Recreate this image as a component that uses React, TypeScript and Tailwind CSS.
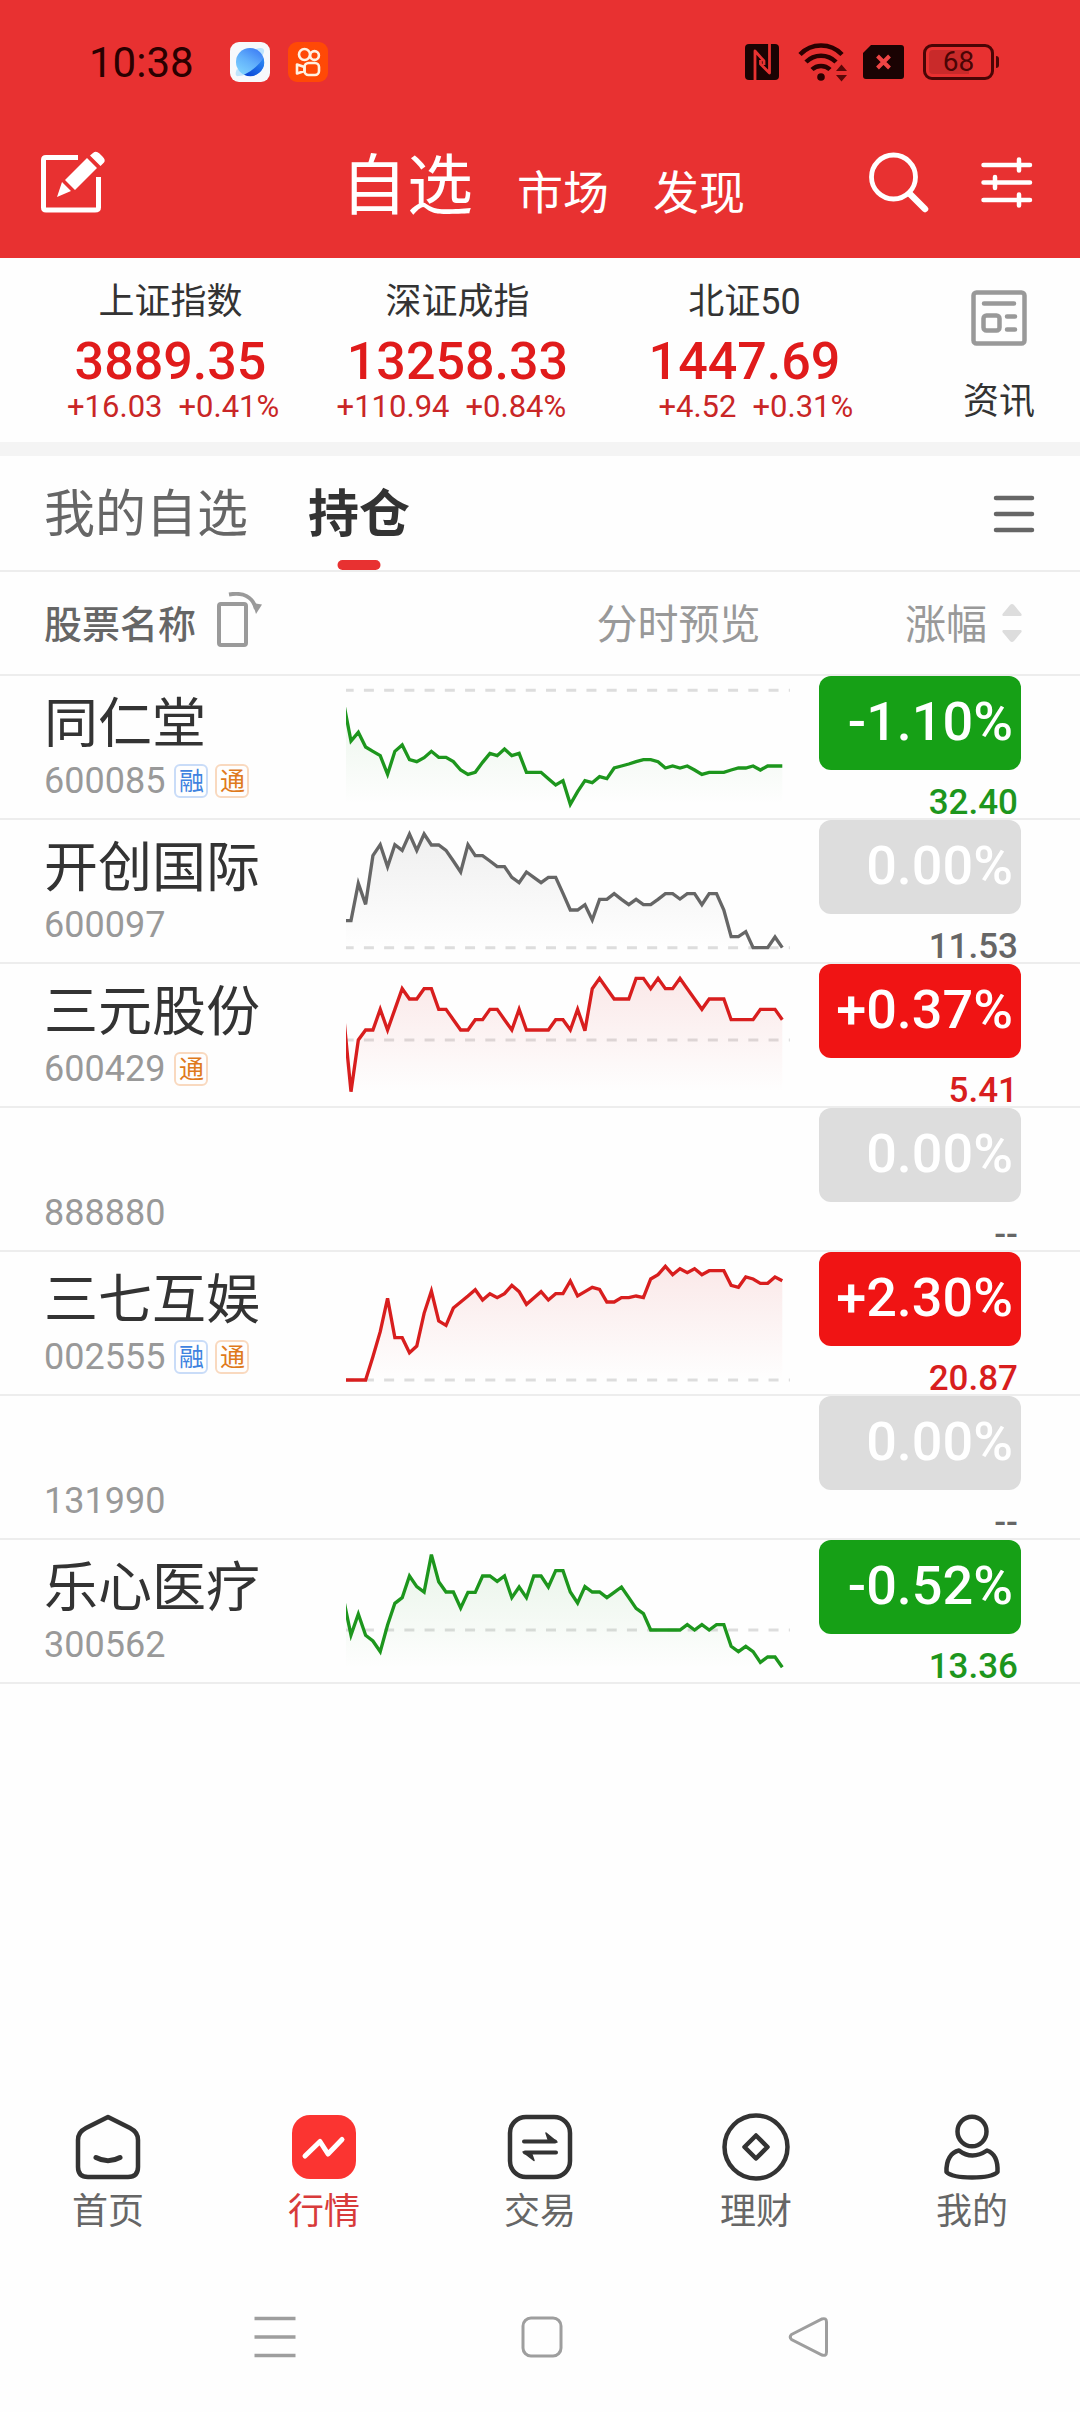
import React from "react";

const UP = "#d81e1e";
const DOWN = "#1d961d";
const FLAT = "#666666";

type Trend = "up" | "down" | "flat";

interface Stock {
  name: string;
  code: string;
  tags: ("融" | "通")[];
  trend: Trend;
  change: string;
  price: string;
  base?: number;
  series?: number[];
}

const stocks: Stock[] = [
  {
    name: "同仁堂", code: "600085", tags: ["融", "通"], trend: "down", change: "-1.10%", price: "32.40", base: 43,
    series: [82, 195, 169, 213, 226, 239, 295, 226, 207, 251, 257, 245, 226, 244, 244, 257, 282, 295, 289, 259, 232, 239, 219, 239, 232, 289, 289, 289, 308, 327, 314, 385, 347, 314, 320, 302, 308, 276, 270, 264, 257, 251, 251, 257, 276, 270, 276, 270, 282, 295, 289, 289, 289, 282, 276, 276, 270, 282, 270, 270, 270],
  },
  {
    name: "开创国际", code: "600097", tags: [], trend: "flat", change: "0.00%", price: "11.53", base: 383,
    series: [302, 302, 190, 253, 107, 74, 140, 74, 91, 42, 91, 42, 75, 75, 91, 123, 156, 74, 107, 107, 123, 140, 140, 172, 188, 156, 172, 188, 172, 172, 220, 270, 270, 254, 300, 238, 238, 221, 238, 254, 238, 254, 254, 238, 221, 221, 237, 221, 221, 254, 221, 221, 270, 350, 350, 335, 383, 383, 383, 351, 383],
  },
  {
    name: "三元股份", code: "600429", tags: ["通"], trend: "up", change: "+0.37%", price: "5.41", base: 228,
    series: [158, 383, 228, 198, 198, 136, 198, 136, 74, 105, 105, 74, 74, 136, 136, 167, 198, 198, 167, 167, 136, 136, 167, 198, 136, 198, 198, 198, 198, 167, 167, 198, 136, 200, 74, 43, 74, 105, 105, 105, 43, 43, 74, 43, 74, 74, 43, 74, 105, 136, 105, 105, 105, 167, 167, 167, 167, 136, 136, 136, 167],
  },
  { name: "", code: "888880", tags: [], trend: "flat", change: "0.00%", price: "--" },
  {
    name: "三七互娱", code: "002555", tags: ["融", "通"], trend: "up", change: "+2.30%", price: "20.87", base: 384,
    series: [384, 384, 384, 384, 314, 239, 139, 257, 257, 302, 282, 184, 117, 207, 220, 168, 150, 132, 113, 144, 125, 137, 125, 100, 119, 157, 138, 119, 144, 125, 125, 87, 132, 119, 106, 112, 150, 150, 137, 137, 132, 137, 81, 68, 43, 68, 50, 62, 50, 68, 56, 56, 56, 100, 106, 75, 81, 94, 94, 75, 86],
  },
  { name: "", code: "131990", tags: [], trend: "flat", change: "0.00%", price: "--" },
  {
    name: "乐心医疗", code: "300562", tags: [], trend: "down", change: "-0.52%", price: "13.36", base: 270,
    series: [180, 285, 222, 286, 303, 335, 255, 190, 173, 108, 140, 156, 44, 125, 156, 156, 204, 157, 157, 108, 108, 124, 108, 173, 141, 173, 108, 108, 141, 92, 92, 156, 189, 140, 156, 156, 173, 157, 141, 173, 205, 221, 270, 270, 270, 270, 270, 254, 270, 254, 270, 254, 254, 319, 335, 319, 335, 367, 351, 351, 382],
  },
];

const indices = [
  { name: "上证指数", value: "3889.35", diff: "+16.03", pct: "+0.41%" },
  { name: "深证成指", value: "13258.33", diff: "+110.94", pct: "+0.84%" },
  { name: "北证50", value: "1447.69", diff: "+4.52", pct: "+0.31%" },
];

const trendColor: Record<Trend, string> = { up: UP, down: DOWN, flat: FLAT };
const badgeClass: Record<Trend, string> = { up: "bg-[#f01414]", down: "bg-[#16a016]", flat: "bg-[#dddddd]" };
const priceClass: Record<Trend, string> = { up: "text-[#d81e1e]", down: "text-[#1d961d]", flat: "text-[#666666]" };

function Sparkline({ stock }: { stock: Stock }) {
  if (!stock.series) return null;
  const color = trendColor[stock.trend];
  const pts = stock.series.map((y, i) => `${(17 + 21.95 * (i - 1)).toFixed(1)},${y}`).join(" ");
  const id = `fill-${stock.code}`;
  return (
    <svg className="block h-[142px] w-full" viewBox="2 0 1336 426" preserveAspectRatio="none" role="img" aria-label={`${stock.name}分时预览`}>
      <defs>
        <linearGradient id={id} gradientUnits="userSpaceOnUse" x1="0" y1="30" x2="0" y2="385">
          <stop offset="0" stopColor={color} stopOpacity="0.1" />
          <stop offset="1" stopColor={color} stopOpacity="0" />
        </linearGradient>
      </defs>
      <line x1="-5" x2="1335" y1={stock.base} y2={stock.base} stroke="#dddddd" strokeWidth="9" strokeDasharray="30 30.75" />
      <polygon points={`-5,385 ${pts} 1312,385`} fill={`url(#${id})`} />
      <polyline points={pts} fill="none" stroke={color} strokeWidth="10" strokeMiterlimit="4" />
    </svg>
  );
}

function Tag({ kind }: { kind: "融" | "通" }) {
  const tone = kind === "融" ? "border-[#c9dcf8] text-[#3f83e0]" : "border-[#f9d9bf] text-[#df7a1c]";
  return (
    <span className={`flex size-[34px] items-center justify-center rounded-md border-2 pt-0.5 text-[25px] leading-[28px] ${tone}`}>{kind}</span>
  );
}

function StatusBar() {
  return (
    <div className="flex h-[124px] items-center justify-between pr-[81px] pl-[89px] text-[#2a0000]">
      <div className="flex items-center">
        <span className="pt-0.5 text-[42px] leading-[48px]">10:38</span>
        <svg className="ml-9" width="40" height="40" viewBox="0 0 40 40" aria-hidden="true">
          <defs>
            <linearGradient id="planet" x1="0.8" y1="0" x2="0.2" y2="1">
              <stop offset="0" stopColor="#3b7bf5" />
              <stop offset="0.5" stopColor="#62b0fb" />
              <stop offset="1" stopColor="#7fd4ff" />
            </linearGradient>
            <linearGradient id="planetShade" x1="1" y1="0" x2="0.2" y2="1">
              <stop offset="0" stopColor="#2f8df5" />
              <stop offset="1" stopColor="#0a49d8" />
            </linearGradient>
          </defs>
          <rect width="40" height="40" rx="9" fill="#f7f9fc" />
          <path d="M26 7 C31 5 35 6 34 10 C33 14 30 18 27 21 Z" fill="#bfe4fd" />
          <path d="M7 27 C5 31 5 35 9 34 C12 34 14 33 16 32 Z" fill="#bfe4fd" />
          <circle cx="20" cy="20" r="14" fill="url(#planet)" />
          <path d="M33.500 16 A14 14 0 0 1 14 32.700 C22 29 29 23 33.500 16 Z" fill="url(#planetShade)" />
        </svg>
        <svg className="ml-[18px]" width="40" height="40" viewBox="0 0 40 40" aria-hidden="true">
          <rect width="40" height="40" rx="9" fill="#ff4906" />
          <g fill="none" stroke="#fff1e2" strokeWidth="2.600">
            <circle cx="16.500" cy="12.500" r="5.500" />
            <circle cx="26.500" cy="13.500" r="4.400" />
            <rect x="16.500" y="21" width="14.500" height="12" rx="4" />
            <path d="M16.500 25 L9 22.500 V31.500 L16.500 29 Z" strokeLinejoin="round" />
          </g>
        </svg>
      </div>
      <div className="flex items-center">
        <svg width="34" height="36" viewBox="0 0 34 36" aria-hidden="true">
          <rect width="34" height="36" rx="4" fill="#1a0303" />
          <path d="M10 36 V7 L19 17 V21 M24.500 0 V29 L15.500 20 V16" fill="none" stroke="#e83231" strokeWidth="2.800" strokeLinejoin="round" />
        </svg>
        <svg className="ml-[19px]" width="50" height="40" viewBox="0 0 50 40" aria-hidden="true">
          <g fill="none" stroke="#2a0000" strokeWidth="4.500">
            <path d="M2 12.500 A29 29 0 0 1 44 12.500" />
            <path d="M8 20 A21 21 0 0 1 38 20" />
            <path d="M14 27.500 A13 13 0 0 1 32 27.500" />
          </g>
          <circle cx="23" cy="35" r="3.800" fill="#2a0000" />
          <path d="M38 29 L43.500 22.500 L49 29 Z M38 33 H49 L43.500 39.500 Z" fill="#5a0808" />
        </svg>
        <svg className="ml-[15px]" width="41" height="34" viewBox="0 0 41 34" aria-hidden="true">
          <path d="M8 0 H38 Q41 0 41 3 V31 Q41 34 38 34 H3 Q0 34 0 31 V8 Z" fill="#1a0303" />
          <path d="M14.500 11 L26.500 23 M26.500 11 L14.500 23" stroke="#f04545" strokeWidth="4" />
        </svg>
        <div className="ml-[19px] flex items-center gap-0.5">
          <div className="flex h-9 w-[71px] items-center rounded-[9px] border-3 border-[#4a0505] p-[3px]">
            <div className="flex h-full w-full items-center justify-center rounded bg-[linear-gradient(90deg,#c92a2a_68%,#e83131_68%)] text-[28px] leading-[24px] text-[#4a0505]">68</div>
          </div>
          <div className="h-3 w-[3px] rounded-r-sm bg-[#4a0505]" />
        </div>
      </div>
    </div>
  );
}

function Header() {
  return (
    <header className="bg-[#e83131] pb-[18px] text-white">
      <StatusBar />
      <div className="grid h-[116px] grid-cols-[1fr_auto_1fr] items-center pr-[34px] pl-10">
        <button type="button" aria-label="编辑" className="justify-self-start">
          <svg width="66" height="64" viewBox="0 0 66 64" aria-hidden="true">
            <path d="M38 7.500 H6 Q3.500 7.500 3.500 10 V57.500 Q3.500 60 6 60 H55 Q58.500 60 58.500 57.500 V27" fill="none" stroke="#fff" strokeWidth="5" />
            <path d="M17 47 L22 32 L31 41 Z M25 30 L47 8 L57 18 L35 40 Z M50 5.500 L53 3 Q56 0.500 59.500 3.500 L62.500 6.500 Q66 10 64 12.500 L60.500 16 Z" fill="#fff" />
          </svg>
        </button>
        <nav className="flex items-baseline gap-11 pt-2.5" aria-label="行情">
          <a href="#self" aria-current="page" className="text-[66px] leading-[80px]">自选</a>
          <a href="#market" className="text-[46px] leading-[56px]">市场</a>
          <a href="#discover" className="text-[46px] leading-[56px]">发现</a>
        </nav>
        <div className="flex items-center gap-[42px] justify-self-end">
          <button type="button" aria-label="搜索">
            <svg width="64" height="64" viewBox="0 0 64 64" aria-hidden="true">
              <g fill="none" stroke="#fff" strokeLinecap="round">
                <circle cx="25.500" cy="27" r="22" strokeWidth="4.800" />
                <path d="M42 44 L57 59" strokeWidth="6.500" />
              </g>
            </svg>
          </button>
          <button type="button" aria-label="筛选">
            <svg width="72" height="64" viewBox="0 0 72 64" aria-hidden="true">
              <path d="M9.500 15 H56 M9.500 32.500 H56 M9.500 50 H56 M45 9.500 V20.500 M21 27 V38 M45 44.500 V55.500" fill="none" stroke="#fff" strokeWidth="4.500" strokeLinecap="round" />
            </svg>
          </button>
        </div>
      </div>
    </header>
  );
}

function IndexStrip() {
  return (
    <section className="flex h-[198px] items-start gap-[75px] border-b-[14px] border-[#f4f4f4] pr-[45px] pl-[27px]">
      <div className="grid flex-1 grid-cols-3 pt-[22px]">
        {indices.map((it) => (
          <a key={it.name} href="#index" className="flex flex-col items-center">
            <span className="text-[36px] leading-[44px] text-[#333333]">{it.name}</span>
            <span className="mt-[10px] text-[52px] leading-[56px] font-medium text-[#e01b1b]">{it.value}</span>
            <span className="grid w-full grid-cols-2 gap-4 text-[31px] leading-[34px] text-[#c92626]">
              <span className="text-right">{it.diff}</span>
              <span>{it.pct}</span>
            </span>
          </a>
        ))}
      </div>
      <button type="button" className="flex flex-col items-center pt-8">
        <svg width="56" height="56" viewBox="0 0 56 56" fill="none" stroke="#999999" aria-hidden="true">
          <rect x="2.500" y="2.500" width="51" height="51" rx="3" strokeWidth="4.500" />
          <path d="M13 13.500 H43 M36 26.500 H44 M36 39.500 H44" strokeWidth="4.500" strokeLinecap="round" />
          <rect x="12.500" y="25.500" width="16" height="15" rx="3" strokeWidth="4.500" />
        </svg>
        <span className="mt-[34px] text-[36px] leading-[44px] text-[#333333]">资讯</span>
      </button>
    </section>
  );
}

function ListTabs() {
  return (
    <div className="flex h-[116px] items-stretch border-b-2 border-[#ededed] pr-[43px] pl-11">
      <div className="flex flex-1 gap-[60px] text-[51px] leading-[60px]" role="tablist">
        <button type="button" role="tab" aria-selected="false" className="pt-1 text-[#666666]">我的自选</button>
        <button type="button" role="tab" aria-selected="true" className="relative pt-1 font-bold text-[#333333]">
          持仓
          <span className="absolute bottom-0 left-1/2 h-[10px] w-[43px] -translate-x-1/2 rounded-full bg-[#e83131]" />
        </button>
      </div>
      <button type="button" aria-label="菜单">
        <svg width="44" height="46" viewBox="0 0 44 46" aria-hidden="true">
          <path d="M3 8 H39 M3 24 H39 M3 40 H39" stroke="#666666" strokeWidth="4.500" strokeLinecap="round" />
        </svg>
      </button>
    </div>
  );
}

function StockTable() {
  return (
    <table className="w-full table-fixed border-separate border-spacing-0">
      <thead>
        <tr>
          <th scope="col" className="h-[104px] w-[32%] border-b-2 border-[#ededed] p-0 pl-11 text-left">
            <span className="flex items-center gap-[21px]">
              <span className="pt-1 text-[38px] leading-[44px] font-medium text-[#666666]">股票名称</span>
              <button type="button" aria-label="横屏">
                <svg width="48" height="62" viewBox="0 0 48 62" fill="none" stroke="#9a9a9a" aria-hidden="true">
                  <rect x="2" y="12" width="27" height="41" rx="2" strokeWidth="4" />
                  <path d="M12 2.500 C26 0 36 5 39 17" strokeWidth="4" />
                  <path d="M35.500 11 L45 12.500 L39 22 Z" fill="#9a9a9a" stroke="none" />
                </svg>
              </button>
            </span>
          </th>
          <th scope="col" className="w-[41.2%] border-b-2 border-[#ededed] p-0 pt-1 pr-[30px] text-right text-[41px] leading-[48px] font-normal text-[#999999]">分时预览</th>
          <th scope="col" className="border-b-2 border-[#ededed] p-0 pr-[58px] text-right font-normal">
            <button type="button" className="inline-flex items-center gap-[15px] align-middle text-[41px] leading-[48px] text-[#999999]">
              <span className="pt-1">涨幅</span>
              <svg width="20" height="38" viewBox="0 0 20 38" fill="#dddddd" aria-hidden="true">
                <path d="M10 0 Q11 0 12 1 L19.500 10 Q20 12 18.500 12 H1.500 Q0 12 0.500 10 L8 1 Q9 0 10 0 Z M10 38 Q11 38 12 37 L19.500 28 Q20 26 18.500 26 H1.500 Q0 26 0.500 28 L8 37 Q9 38 10 38 Z" />
              </svg>
            </button>
          </th>
        </tr>
      </thead>
      <tbody>
        {stocks.map((s) => (
          <tr key={s.code}>
            <td className="border-b-2 border-[#ededed] p-0 pl-11 align-top">
              <div className="mt-[18px] h-[60px] text-[54px] leading-[62px] whitespace-nowrap text-[#333333]">{s.name}</div>
              <div className="mt-2 flex items-center gap-[7px]">
                <span className="mr-0.5 text-[36px] leading-[38px] text-[#999999]">{s.code}</span>
                {s.tags.map((t) => <Tag key={t} kind={t} />)}
              </div>
            </td>
            <td className="border-b-2 border-[#ededed] p-0 align-top"><Sparkline stock={s} /></td>
            <td className="border-b-2 border-[#ededed] p-0 pr-[59px] pl-7 align-top">
              <div className={`flex h-[94px] items-center justify-end rounded-xl pr-2 pb-0.5 text-[54px] leading-[60px] font-medium text-white ${badgeClass[s.trend]}`}>{s.change}</div>
              <div className={`mt-[17px] pr-[3px] text-right text-[35px] leading-[31px] font-medium ${priceClass[s.trend]}`}>{s.price}</div>
            </td>
          </tr>
        ))}
      </tbody>
    </table>
  );
}

const stroke = { fill: "none", stroke: "#333333", strokeWidth: 4.5, strokeLinecap: "round", strokeLinejoin: "round" } as const;

const navItems = [
  {
    label: "首页",
    icon: <g {...stroke}><path d="M34 4 L56 15 Q64 19 64 27 V54 Q64 64 54 64 H14 Q4 64 4 54 V27 Q4 19 12 15 Z" /><path d="M22 44.500 Q34 51 46 44.500" strokeWidth="5" /></g>,
  },
  {
    label: "行情",
    icon: <g><rect x="2" y="2" width="64" height="64" rx="18" fill="#fb3431" /><path d="M15 43 L30 28.500 L38 41 L52 26.500" fill="none" stroke="#fff" strokeWidth="5" strokeLinecap="round" strokeLinejoin="round" /></g>,
  },
  {
    label: "交易",
    icon: <g {...stroke}><rect x="4" y="4" width="60" height="60" rx="16" /><path d="M18 28.500 H49 M50 39.500 H19" strokeWidth="4" /><path d="M40 20 L51 29 H43 Z M28 47.500 L17 39 H25 Z" fill="#333333" strokeWidth="1.500" /></g>,
  },
  {
    label: "理财",
    icon: <g {...stroke}><circle cx="34" cy="34" r="31.500" /><path d="M34 22.500 L45.500 34 L34 45.500 L22.500 34 Z" /></g>,
  },
  {
    label: "我的",
    icon: <g {...stroke}><ellipse cx="34" cy="18.500" rx="14.500" ry="14.800" /><path d="M21 37.500 Q34 47.500 49 37.500 C56 40 60 47 59.500 59 Q54 64.500 34 64.500 Q14 64.500 8.500 59 C8 47 13 39 21 37.500 Z" /></g>,
  },
];

function BottomBar() {
  return (
    <footer className="mt-auto">
      <nav className="grid grid-cols-5" aria-label="主导航">
        {navItems.map((n) => (
          <a key={n.label} href="#nav" className="flex flex-col items-center">
            <svg width="68" height="68" viewBox="0 0 68 68" aria-hidden="true">{n.icon}</svg>
            <span className={n.label === "行情" ? "mt-[9px] text-[36px] leading-[44px] text-[#d83a3a]" : "mt-[9px] text-[36px] leading-[44px] text-[#666666]"}>{n.label}</span>
          </a>
        ))}
      </nav>
      <div className="grid grid-cols-3 justify-items-center pt-[82px] pr-[138px] pb-[54px] pl-[142px]">
        <button type="button" aria-label="最近任务">
          <svg width="42" height="42" viewBox="0 0 42 42" aria-hidden="true"><path d="M0.500 2.500 H41.500 M0.500 21 H41.500 M0.500 39.500 H41.500" stroke="#9e9e9e" strokeWidth="3.500" /></svg>
        </button>
        <button type="button" aria-label="主屏幕">
          <svg width="42" height="42" viewBox="0 0 42 42" aria-hidden="true"><rect x="2" y="2" width="38" height="38" rx="8" fill="none" stroke="#9e9e9e" strokeWidth="3" /></svg>
        </button>
        <button type="button" aria-label="返回">
          <svg width="42" height="42" viewBox="0 0 42 42" aria-hidden="true"><path d="M3.500 18.500 L34 3 Q38.500 1.500 38.500 6 V36 Q38.500 40.500 34 39 L3.500 23.500 Q1 21 3.500 18.500 Z" fill="none" stroke="#9e9e9e" strokeWidth="3" /></svg>
        </button>
      </div>
    </footer>
  );
}

export default function App() {
  return (
    <div className="flex min-h-screen flex-col bg-[#fefefe] font-[Roboto,'Noto_Sans_CJK_SC',sans-serif]" lang="zh-CN">
      <Header />
      <main>
        <IndexStrip />
        <ListTabs />
        <StockTable />
      </main>
      <BottomBar />
    </div>
  );
}
